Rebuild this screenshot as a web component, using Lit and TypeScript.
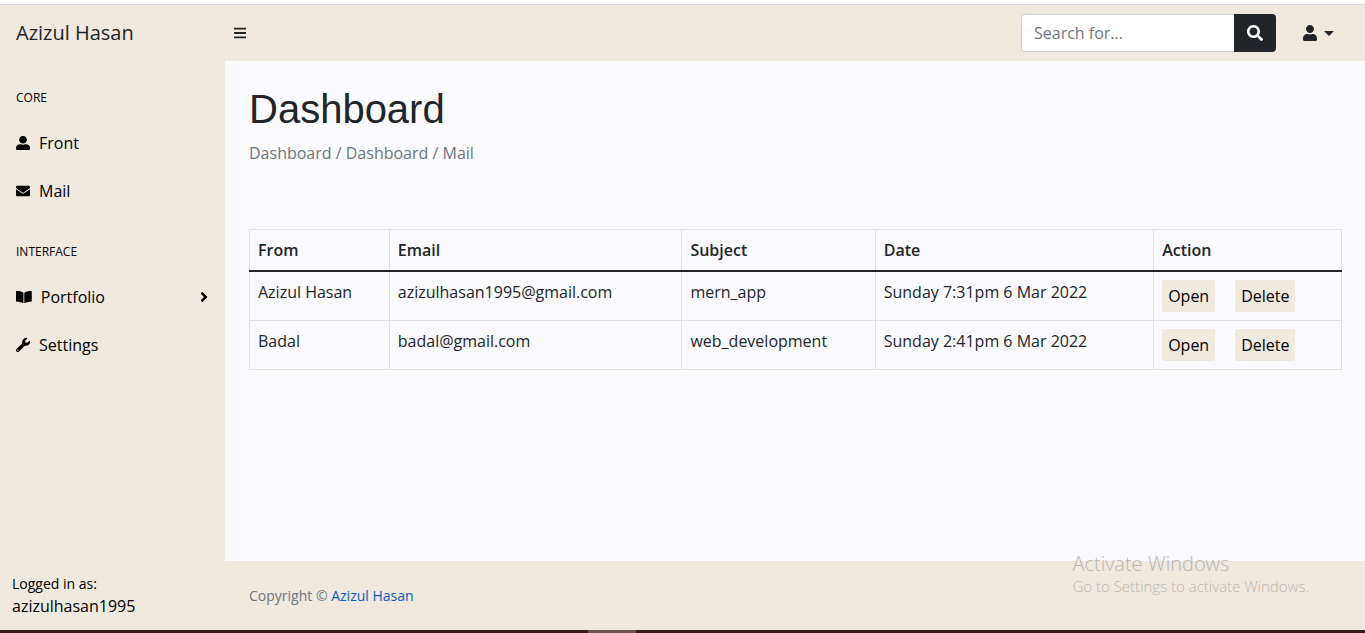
import { LitElement, html, css, svg } from "lit";
import { customElement, property, state } from "lit/decorators.js";

type Glyph = { box: string; path: string };

const GLYPHS: Record<string, Glyph> = {
  bars: {
    box: "0 0 448 512",
    path: "M16 132h416c8.8 0 16-7.2 16-16V76c0-8.8-7.2-16-16-16H16C7.2 60 0 67.2 0 76v40c0 8.8 7.2 16 16 16zm0 160h416c8.8 0 16-7.2 16-16v-40c0-8.8-7.2-16-16-16H16c-8.8 0-16 7.2-16 16v40c0 8.8 7.2 16 16 16zm0 160h416c8.8 0 16-7.2 16-16v-40c0-8.8-7.2-16-16-16H16c-8.8 0-16 7.2-16 16v40c0 8.8 7.2 16 16 16z",
  },
  search: {
    box: "0 0 512 512",
    path: "M505 442.7L405.3 343c-4.5-4.5-10.6-7-17-7H372c27.6-35.3 44-79.7 44-128C416 93.1 322.9 0 208 0S0 93.1 0 208s93.1 208 208 208c48.3 0 92.7-16.4 128-44v16.3c0 6.4 2.5 12.5 7 17l99.7 99.7c9.4 9.4 24.6 9.4 33.9 0l28.3-28.3c9.4-9.4 9.4-24.6.1-34zM208 336c-70.7 0-128-57.2-128-128 0-70.7 57.2-128 128-128 70.7 0 128 57.2 128 128 0 70.7-57.2 128-128 128z",
  },
  account: {
    box: "0 0 448 512",
    path: "M224 256c70.7 0 128-57.3 128-128S294.7 0 224 0 96 57.3 96 128s57.3 128 128 128zm89.6 32h-16.7c-22.2 10.2-46.9 16-72.9 16s-50.6-5.8-72.9-16h-16.7C60.2 288 0 348.2 0 422.4V464c0 26.5 21.5 48 48 48h352c26.5 0 48-21.5 48-48v-41.6c0-74.2-60.2-134.4-134.4-134.4z",
  },
  user: {
    box: "0 0 448 448",
    path: "M224 240c70.7 0 124-53.7 124-120S294.7 0 224 0 100 53.7 100 120s53.3 120 124 120zm96 24h-24c-22 9-46 14-72 14s-50-5-72-14h-24C58 264 0 308 0 372v36c0 24 18 40 44 40h360c26 0 44-16 44-40v-36c0-64-58-108-128-108z",
  },
  envelope: {
    box: "0 0 512 512",
    path: "M502.3 190.8c3.9-3.1 9.7-.2 9.7 4.7V400c0 26.5-21.5 48-48 48H48c-26.5 0-48-21.5-48-48V195.6c0-5 5.7-7.8 9.7-4.7 22.4 17.4 52.1 39.5 154.1 113.6 21.1 15.4 56.7 47.8 92.2 47.6 35.7.3 72-32.8 92.3-47.6 102-74.1 131.6-96.3 154-113.7zM256 320c23.2.4 56.6-29.2 73.4-41.4 132.7-96.3 142.8-104.7 173.4-128.7 5.8-4.5 9.2-11.5 9.2-18.9v-19c0-26.5-21.5-48-48-48H48c-26.5 0-48 21.5-48 48v19c0 7.4 3.4 14.3 9.2 18.9 30.6 23.9 40.7 32.4 173.4 128.7 16.8 12.2 50.2 41.8 73.4 41.4z",
  },
  book: {
    box: "0 0 576 512",
    path: "M542.22 32.05c-54.8 3.11-163.72 14.43-230.96 55.59-4.64 2.84-7.27 7.89-7.27 13.17v363.87c0 11.55 12.63 18.85 23.28 13.49 69.18-34.82 169.23-44.32 218.7-46.92 16.89-.89 30.02-14.43 30.02-30.66V62.75c.01-17.71-15.35-31.74-33.77-30.7zM264.73 87.64C197.5 46.48 88.58 35.17 33.78 32.05 15.36 31.01 0 45.04 0 62.75V400.6c0 16.24 13.13 29.78 30.02 30.66 49.49 2.6 149.59 12.11 218.77 46.95 10.62 5.35 23.21-1.94 23.21-13.46V100.63c0-5.29-2.62-10.14-7.27-12.99z",
  },
  wrench: {
    box: "0 0 512 512",
    path: "M507.73 109.1c-2.24-9.03-13.54-12.09-20.12-5.51l-74.36 74.36-67.88-11.31-11.31-67.88 74.36-74.36c6.62-6.62 3.43-17.9-5.66-20.16-47.38-11.74-99.55.91-136.58 37.93-39.64 39.64-50.55 97.1-34.05 147.2L18.74 402.76c-24.99 24.99-24.99 65.51 0 90.5 24.99 24.99 65.51 24.99 90.5 0l213.21-213.21c50.12 16.71 107.47 5.68 147.37-34.22 37.07-37.07 49.7-89.32 37.91-136.73zM64 472c-13.25 0-24-10.75-24-24 0-13.26 10.75-24 24-24s24 10.74 24 24c0 13.25-10.75 24-24 24z",
  },
  angle: {
    box: "0 0 256 512",
    path: "M224.3 273l-136 136c-9.4 9.4-24.6 9.4-33.9 0l-22.6-22.6c-9.4-9.4-9.4-24.6 0-33.9l96.4-96.4-96.4-96.4c-9.4-9.4-9.4-24.6 0-33.9L54.3 103c9.4-9.4 24.6-9.4 33.9 0l136 136c9.5 9.4 9.5 24.6.1 34z",
  },
};

@customElement("app-icon")
class AppIcon extends LitElement {
  @property() name = "user";

  static styles = css`
    :host {
      display: inline-flex;
      height: 16px;
    }
    .glyph {
      display: block;
      height: 100%;
      fill: currentColor;
    }
  `;

  render() {
    const glyph = GLYPHS[this.name];
    return html`<svg class="glyph" viewBox=${glyph.box} aria-hidden="true">${svg`<path d=${glyph.path}></path>`}</svg>`;
  }
}

type NavItem = { label: string; icon: string; expandable?: boolean };
type NavGroup = { heading: string; items: NavItem[] };
type Message = { from: string; email: string; subject: string; date: string };

const NAV: NavGroup[] = [
  {
    heading: "CORE",
    items: [
      { label: "Front", icon: "user" },
      { label: "Mail", icon: "envelope" },
    ],
  },
  {
    heading: "INTERFACE",
    items: [
      { label: "Portfolio", icon: "book", expandable: true },
      { label: "Settings", icon: "wrench" },
    ],
  },
];

const MESSAGES: Message[] = [
  { from: "Azizul Hasan", email: "azizulhasan1995@gmail.com", subject: "mern_app", date: "Sunday 7:31pm 6 Mar 2022" },
  { from: "Badal", email: "badal@gmail.com", subject: "web_development", date: "Sunday 2:41pm 6 Mar 2022" },
];

@customElement("app-root")
class AppRoot extends LitElement {
  @state() private messages = MESSAGES;

  static styles = css`
    :host {
      display: flex;
      flex-direction: column;
      min-height: 100vh;
      box-sizing: border-box;
      font: 400 16px/24px "Open Sans", "Noto Sans", sans-serif;
      color: #212529;
      background: #fbfaff;
      --sand: #f0e9df;
      --line: #dee2e6;
    }
    * {
      box-sizing: border-box;
    }
    a {
      color: inherit;
      text-decoration: none;
    }
    button,
    input {
      font: inherit;
      color: inherit;
      margin: 0;
    }
    .edge {
      height: 5px;
      background: #fff;
      border-bottom: 1px solid #d5d8db;
    }
    .topbar {
      display: flex;
      align-items: center;
      height: 56px;
      background: var(--sand);
      padding-right: 24px;
    }
    .brand {
      width: 225px;
      padding-left: 16px;
      font-size: 20px;
      line-height: 30px;
    }
    .toggle {
      display: flex;
      border: 0;
      background: none;
      padding: 8px;
    }
    .toggle app-icon {
      height: 14px;
      padding-left: 1px;
    }
    .search {
      display: flex;
      margin-left: auto;
      height: 38px;
    }
    .search-input {
      width: 213px;
      padding: 6px 12px;
      border: 1px solid #ced4da;
      border-right: 0;
      border-radius: 4px 0 0 4px;
      background: #fff;
    }
    .search-input::placeholder {
      color: #6c757d;
      opacity: 1;
    }
    .search-button {
      display: flex;
      align-items: center;
      justify-content: center;
      width: 42px;
      padding: 0;
      border: 0;
      border-radius: 0 4px 4px 0;
      background: #212529;
      color: #fff;
    }
    .account {
      display: flex;
      align-items: center;
      gap: 7px;
      margin-left: 19px;
      padding: 8px 7px 8px 8px;
      border: 0;
      background: none;
    }
    .caret {
      border: 5px solid transparent;
      border-top-color: currentColor;
      border-bottom: 0;
    }
    .body {
      display: flex;
      flex: 1;
    }
    .sidebar {
      display: flex;
      flex-direction: column;
      width: 225px;
      flex-shrink: 0;
      background: var(--sand);
      color: #000;
    }
    .menu {
      flex: 1;
    }
    .heading {
      margin: 0;
      padding: 28px 16px 12px;
      font-size: 12px;
      line-height: 18px;
      font-weight: 500;
    }
    .item {
      display: flex;
      align-items: center;
      gap: 9px;
      padding: 12px 17px 12px 16px;
    }
    .item app-icon {
      height: 14px;
    }
    .item .arrow {
      height: 16px;
      margin-left: auto;
    }
    .signed-in {
      padding: 12px;
    }
    .small {
      font-size: 14px;
      line-height: 21px;
    }
    .content {
      display: flex;
      flex-direction: column;
      flex: 1;
      min-width: 0;
    }
    .main {
      flex: 1;
      padding: 24px 23px 24px 24px;
    }
    .title {
      margin: 0 0 8px;
      font: 400 40px/48px "Liberation Sans", Arial, sans-serif;
    }
    .crumbs {
      color: #6c757d;
      margin-bottom: 64px;
    }
    .mail {
      width: 100%;
      border-collapse: collapse;
      table-layout: fixed;
    }
    .mail th,
    .mail td {
      border: 1px solid var(--line);
      padding: 8px;
      text-align: left;
      vertical-align: top;
    }
    .mail th {
      font-weight: 600;
    }
    .mail thead th {
      border-bottom: 2px solid #212529;
    }
    .col-from {
      width: 12.8%;
    }
    .col-email {
      width: 26.8%;
    }
    .col-subject {
      width: 17.7%;
    }
    .col-date {
      width: 25.5%;
    }
    .actions {
      display: flex;
      gap: 20px;
    }
    .action {
      padding: 4px 6px;
      border: 0;
      border-radius: 2px;
      background: var(--sand);
      color: #000;
    }
    .footer {
      padding: 24px;
      background: var(--sand);
      color: #6c757d;
    }
    .footer a {
      color: #0d5bc4;
    }
    .taskbar {
      display: flex;
      justify-content: center;
      height: 3px;
      background: #351d18;
    }
    .taskbar-active {
      width: 48px;
      margin-right: 141px;
      background: #66544d;
    }
    .activation {
      position: absolute;
      right: 56px;
      bottom: 36px;
      color: #b9b6b3;
      font-weight: 300;
      pointer-events: none;
    }
    .activation-title {
      margin: 0;
      font-size: 20px;
      line-height: 24px;
    }
    .activation-text {
      margin: 0;
      font-size: 15px;
      line-height: 21px;
    }
  `;

  private remove(message: Message) {
    this.messages = this.messages.filter((entry) => entry !== message);
  }

  render() {
    return html`
      <div class="edge"></div>
      <header class="topbar">
        <a class="brand" href="#">Azizul Hasan</a>
        <button class="toggle" type="button" aria-label="Toggle menu"><app-icon name="bars"></app-icon></button>
        <form class="search" role="search">
          <input class="search-input" type="text" placeholder="Search for..." aria-label="Search for" />
          <button class="search-button" type="button" aria-label="Search"><app-icon name="search"></app-icon></button>
        </form>
        <button class="account" type="button" aria-label="Account">
          <app-icon name="account"></app-icon><span class="caret"></span>
        </button>
      </header>
      <div class="body">
        <aside class="sidebar">
          <nav class="menu">
            ${NAV.map(
              (group) => html`
                <h2 class="heading">${group.heading}</h2>
                ${group.items.map(
                  (item) => html`<a class="item" href="#"
                    ><app-icon name=${item.icon}></app-icon><span>${item.label}</span>${item.expandable
                      ? html`<app-icon class="arrow" name="angle"></app-icon>`
                      : null}</a
                  >`
                )}
              `
            )}
          </nav>
          <div class="signed-in">
            <div class="small">Logged in as:</div>
            <div>azizulhasan1995</div>
          </div>
        </aside>
        <div class="content">
          <main class="main">
            <h1 class="title">Dashboard</h1>
            <div class="crumbs">Dashboard / Dashboard / Mail</div>
            <table class="mail">
              <colgroup>
                <col class="col-from" />
                <col class="col-email" />
                <col class="col-subject" />
                <col class="col-date" />
                <col />
              </colgroup>
              <thead>
                <tr>
                  ${["From", "Email", "Subject", "Date", "Action"].map((name) => html`<th scope="col">${name}</th>`)}
                </tr>
              </thead>
              <tbody>
                ${this.messages.map(
                  (message) => html`<tr>
                    <td>${message.from}</td>
                    <td>${message.email}</td>
                    <td>${message.subject}</td>
                    <td>${message.date}</td>
                    <td>
                      <div class="actions">
                        <button class="action" type="button">Open</button>
                        <button class="action" type="button" @click=${() => this.remove(message)}>Delete</button>
                      </div>
                    </td>
                  </tr>`
                )}
              </tbody>
            </table>
          </main>
          <footer class="footer small">Copyright © <a href="#">Azizul Hasan</a></footer>
        </div>
      </div>
      <div class="taskbar"><span class="taskbar-active"></span></div>
      <div class="activation">
        <p class="activation-title">Activate Windows</p>
        <p class="activation-text">Go to Settings to activate Windows.</p>
      </div>
    `;
  }
}
